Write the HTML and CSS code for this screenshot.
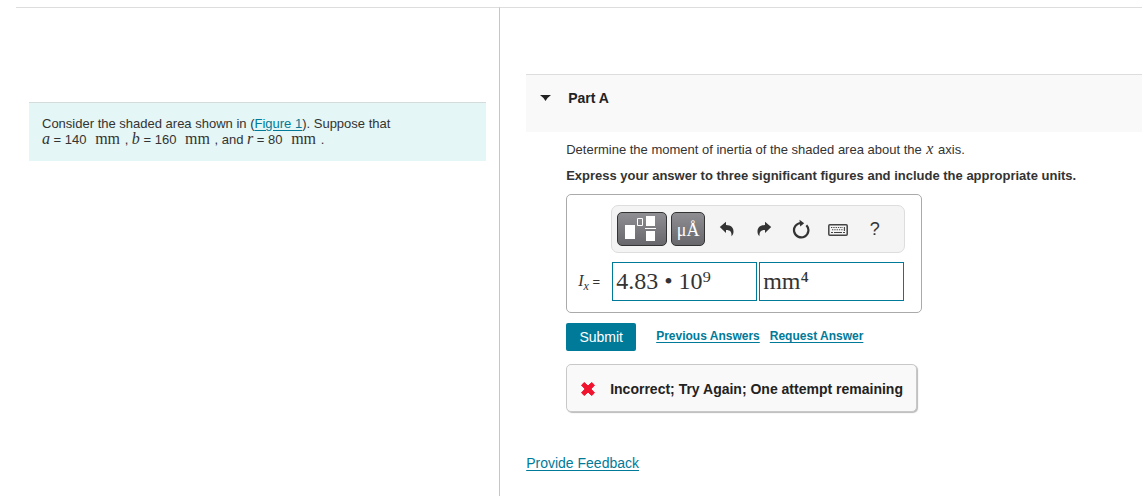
FILE: index.html
```html
<!DOCTYPE html>
<html lang="en">
<head>
<meta charset="utf-8">
<title>Part A</title>
<link rel="stylesheet" href="styles.css">
</head>
<body>
<main class="page">
  <section class="problem">
    <p class="statement">Consider the shaded area shown in (<a href="#figure">Figure 1</a>). Suppose that<br>
      <i class="math">a</i> = 140 <span class="unit">mm</span> , <i class="math">b</i> = 160 <span class="unit">mm</span> , and <i class="math">r</i> = 80 <span class="unit">mm</span> .</p>
  </section>
  <section class="work">
    <header class="part-header">
      <button class="toggle" type="button" aria-label="Collapse Part A"><svg width="11" height="6" viewBox="0 0 11 6"><path d="M0 0h11Q8 2 5.500 6 3 2 0 0z" fill="#222"/></svg></button>
      <h2 class="part-title">Part A</h2>
    </header>
    <form class="part-body">
      <p class="prompt">Determine the moment of inertia of the shaded area about the <i class="math wide">x</i> axis.</p>
      <p class="prompt strong">Express your answer to three significant figures and include the appropriate units.</p>
      <div class="answer">
        <div class="toolbar">
          <button class="dark templates" type="button" aria-label="Templates"><svg width="50" height="34" viewBox="0 0 50 34"><path d="M8 13h10v14H8zM29 4h9v10h-9zM28 16h11v1h-11zM29 19h9v10h-9z" fill="#fff"/><path d="M20.500 6.500h5v7h-5z" fill="none" stroke="#fff"/></svg></button>
          <button class="dark symbols" type="button" aria-label="Symbols">μÅ</button>
          <button class="tool" type="button" aria-label="Undo"><svg width="16" height="16" viewBox="0 0 16 16"><path d="M.8 6 7 .8V4c5 .2 7.500 2.600 7.500 6.500 0 2-.7 3.500-2 4.700C12.800 11 11.500 9 7 9v3z" fill="#333"/></svg></button>
          <button class="tool" type="button" aria-label="Redo"><svg width="16" height="16" viewBox="0 0 16 16"><path d="M15.200 6 9 .8V4C4 4.200 1.500 6.600 1.500 10.500c0 2 .7 3.500 2 4.700C3.200 11 4.500 9 9 9v3z" fill="#333"/></svg></button>
          <button class="tool" type="button" aria-label="Reset"><svg width="18" height="20" viewBox="0 0 18 20"><path d="M14.400 6.200A7.200 7.200 0 1 1 9 4" fill="none" stroke="#333" stroke-width="2.200"/><path d="M7.500 .8 12.200 4.200 8.200 7.600z" fill="#333"/></svg></button>
          <button class="tool keys" type="button" aria-label="Keyboard"><svg width="20" height="12" viewBox="0 0 20 12"><rect x=".8" y=".8" width="18.400" height="10.400" rx="1" fill="none" stroke="#444" stroke-width="1.500"/><path d="M3 3.500h12M4 5.800h11" stroke="#444" stroke-width="1.100" stroke-dasharray="1.300 1"/><path d="M3 8.500h2M6 8.500h8M15 8.500h2M16.400 3v4" stroke="#444" stroke-width="1.100"/></svg></button>
          <button class="tool help" type="button">?</button>
        </div>
        <div class="entry">
          <label class="symbol" for="value"><i class="math">I<sub>x</sub></i> =</label>
          <input class="field" id="value" type="text" value="4.83 • 10⁹">
          <input class="field" type="text" aria-label="Units" value="mm⁴">
        </div>
      </div>
      <div class="actions">
        <button class="submit" type="submit">Submit</button>
        <a href="#previous">Previous Answers</a>
        <a href="#request">Request Answer</a>
      </div>
      <div class="feedback" role="status">
        <svg width="14" height="14" viewBox="0 0 14 14"><path d="M3.300 .5 7 4 10.700 .5 13.500 3.200 9.900 7l3.600 3.800-2.800 2.700L7 10l-3.700 3.500L.5 10.800 4.100 7 .5 3.200z" fill="#f0142f" stroke="#f0142f" stroke-linejoin="round"/></svg>
        <span>Incorrect; Try Again; One attempt remaining</span>
      </div>
    </form>
    <a class="provide" href="#feedback">Provide Feedback</a>
  </section>
</main>
</body>
</html>
```
FILE: styles.css
```css
* { box-sizing: border-box; }
body { margin: 0; background: #fff; color: #333; font: 13px/16px "Liberation Sans", Arial, sans-serif; }
p, h2 { margin: 0; }
button { margin: 0; padding: 0; border: 0; background: none; color: inherit; font: inherit; cursor: pointer; }
svg { display: block; }
a { color: #007a99; text-underline-offset: 2px; }
.page { display: grid; grid-template-columns: 43% 57%; min-height: 100vh; padding-top: 7px; margin-left: 16px; }
.problem, .work { border-top: 1px solid #ddd; }
.problem { padding: 94px 13px 0; border-right: 1px solid #bcc8d2; }
.statement { padding: 13px; border-top: 1px solid #d5dada; background: #e4f6f5; }
.math { font: italic 16px/1px "Liberation Serif", serif; }
.wide { margin: 0 1px; }
.unit { margin: 0 1px 0 5px; font: 16px/1px "Liberation Serif", serif; }
.work { padding: 66px 0 24px 26px; }
.part-header { display: flex; align-items: flex-start; gap: 17px; height: 58px; padding: 14px 14px 0; border-top: 1px solid #ddd; background: #f9f9f9; }
.toggle { padding: 6px 0; }
.part-title { font-size: 14px; line-height: 18px; color: #222; }
.part-body { padding: 10px 0 0 40px; }
.prompt { margin-bottom: 10px; }
.strong { font-weight: bold; }
.answer { width: 356px; max-width: 100%; padding: 10px 16px 11px 11px; border: 1px solid #aaa; border-radius: 5px; }
.toolbar { display: flex; align-items: center; height: 48px; margin-left: 33px; padding-left: 5px; border: 1px solid #ddd; border-radius: 7px; background: #f4f4f4; }
.dark { flex: none; height: 34px; margin-right: 4px; border: 1px solid #333; border-radius: 5px; background: linear-gradient(#8e8e93, #68686c); color: #fff; overflow: hidden; }
.templates { width: 50px; }
.templates svg { margin: -1px; }
.symbols { width: 34px; padding-top: 2px; font: 18px/30px "Liberation Serif", serif; }
.tool { display: grid; place-items: center; width: 37px; height: 34px; }
.tool:nth-child(3) { margin-left: -1px; }
.keys { padding-top: 2px; }
.help { font-size: 18px; }
.entry { display: flex; align-items: center; gap: 2px; margin: 9px 1px 0 0; }
.symbol { flex: none; width: 32px; white-space: nowrap; }
.symbol sub { font-size: 12px; line-height: 1px; }
.field { flex: 1; min-width: 0; width: 0; height: 39px; padding: 0 3px; border: 1px solid #007a99; border-radius: 0; background: #fff; color: #333; font: 24px "Liberation Serif", serif; }
.actions { display: flex; align-items: center; margin-top: 10px; font-size: 12px; line-height: 14px; font-weight: bold; }
.actions a { margin-bottom: 2px; }
.actions a + a { margin-left: 10px; }
.submit { width: 70px; height: 28px; margin-right: 20px; border-radius: 2px; background: #007a99; color: #fff; font-size: 14px; font-weight: normal; }
.feedback { display: flex; align-items: center; gap: 15px; width: fit-content; height: 48px; margin-top: 13px; padding: 1px 13px 0 14px; border: 1px solid #c8c8c8; border-radius: 5px; background: #f9f9f9; box-shadow: 1px 1px 1px #bbb; color: #222; font-size: 14px; font-weight: bold; }
.provide { display: inline-block; margin-top: 43px; font-size: 14px; }
```
